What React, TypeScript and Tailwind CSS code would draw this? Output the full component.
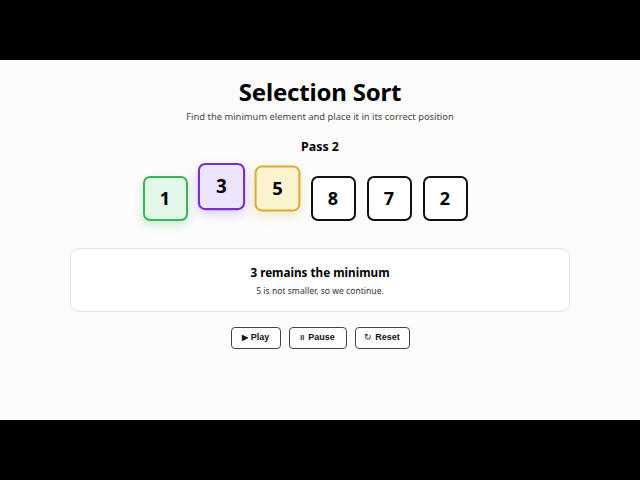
import React from 'react';

type Tone = 'sorted' | 'min' | 'compare' | 'idle';

const bars: { value: number; tone: Tone }[] = [
  { value: 1, tone: 'sorted' },
  { value: 3, tone: 'min' },
  { value: 5, tone: 'compare' },
  { value: 8, tone: 'idle' },
  { value: 7, tone: 'idle' },
  { value: 2, tone: 'idle' },
];

const toneClass: Record<Tone, string> = {
  sorted: 'border-[#3cb55a] bg-[#e3f7e7] shadow-[0_4px_10px_rgba(60,181,90,0.25)]',
  min: 'border-[#7b2fc9] bg-[#ece4fb] -translate-y-[12px] scale-[1.05] shadow-[0_4px_10px_rgba(123,47,201,0.2)]',
  compare: 'border-[#d6ae35] bg-[#fbf3cd] -translate-y-[10px] scale-[1.02] shadow-[0_4px_10px_rgba(214,174,53,0.25)]',
  idle: 'border-[#111111] bg-white',
};

function Cell({ value, tone }: { value: number; tone: Tone }) {
  return (
    <div
      className={`w-[45px] h-[45px] rounded-[7px] border-2 flex items-center justify-center text-[18px] font-bold text-black ${toneClass[tone]}`}
    >
      {value}
    </div>
  );
}

export default function App() {
  return (
    <div className="w-full h-screen bg-black flex flex-col" style={{ fontFamily: '"Noto Sans", "Open Sans", sans-serif' }}>
      <div className="h-[60px] flex-shrink-0" />
      <div className="h-[360px] bg-[#fcfcfc] flex flex-col items-center">
        <h1 className="pt-[17px] text-[24px] leading-[30px] font-bold text-black tracking-[-0.2px]">Selection Sort</h1>
        <p className="mt-[3px] text-[9.4px] leading-[14px] text-[#444]">
          Find the minimum element and place it in its correct position
        </p>
        <p className="mt-[14px] text-[12.4px] leading-[18px] font-bold text-black">Pass 2</p>

        <div className="mt-[20px] flex gap-[11px] pr-[30px]">
          {bars.map((b, i) => (
            <Cell key={i} value={b.value} tone={b.tone} />
          ))}
        </div>

        {/* ── Step explanation ── */}
        <div className="mt-[27px] w-[500px] h-[64px] rounded-[9px] border border-[#e3e3e3] bg-white flex flex-col items-center">
          <p className="pt-[14px] text-[11.7px] leading-[18px] font-bold text-black">3 remains the minimum</p>
          <p className="mt-[4px] text-[8.6px] leading-[13px] text-[#333]">5 is not smaller, so we continue.</p>
        </div>

        {/* ── Controls ── */}
        <div className="mt-[15px] flex gap-[8px]" style={{ fontFamily: '"Liberation Sans", Arial, sans-serif' }}>
          <button className="w-[50px] h-[22px] rounded-[4px] border border-[#444] bg-white text-[9px] font-semibold text-[#111] flex items-center justify-center gap-[3px]">
            <span className="text-[8px]">▶</span>Play
          </button>
          <button className="w-[58px] h-[22px] rounded-[4px] border border-[#444] bg-white text-[9px] font-semibold text-[#111] flex items-center justify-center gap-[4px]">
            <span className="text-[7px] font-bold">ll</span>Pause
          </button>
          <button className="w-[55px] h-[22px] rounded-[4px] border border-[#444] bg-white text-[9px] font-semibold text-[#111] flex items-center justify-center gap-[3px]">
            <span className="text-[9px] font-normal">↻</span>Reset
          </button>
        </div>
      </div>
      <div className="flex-1" />
    </div>
  );
}
